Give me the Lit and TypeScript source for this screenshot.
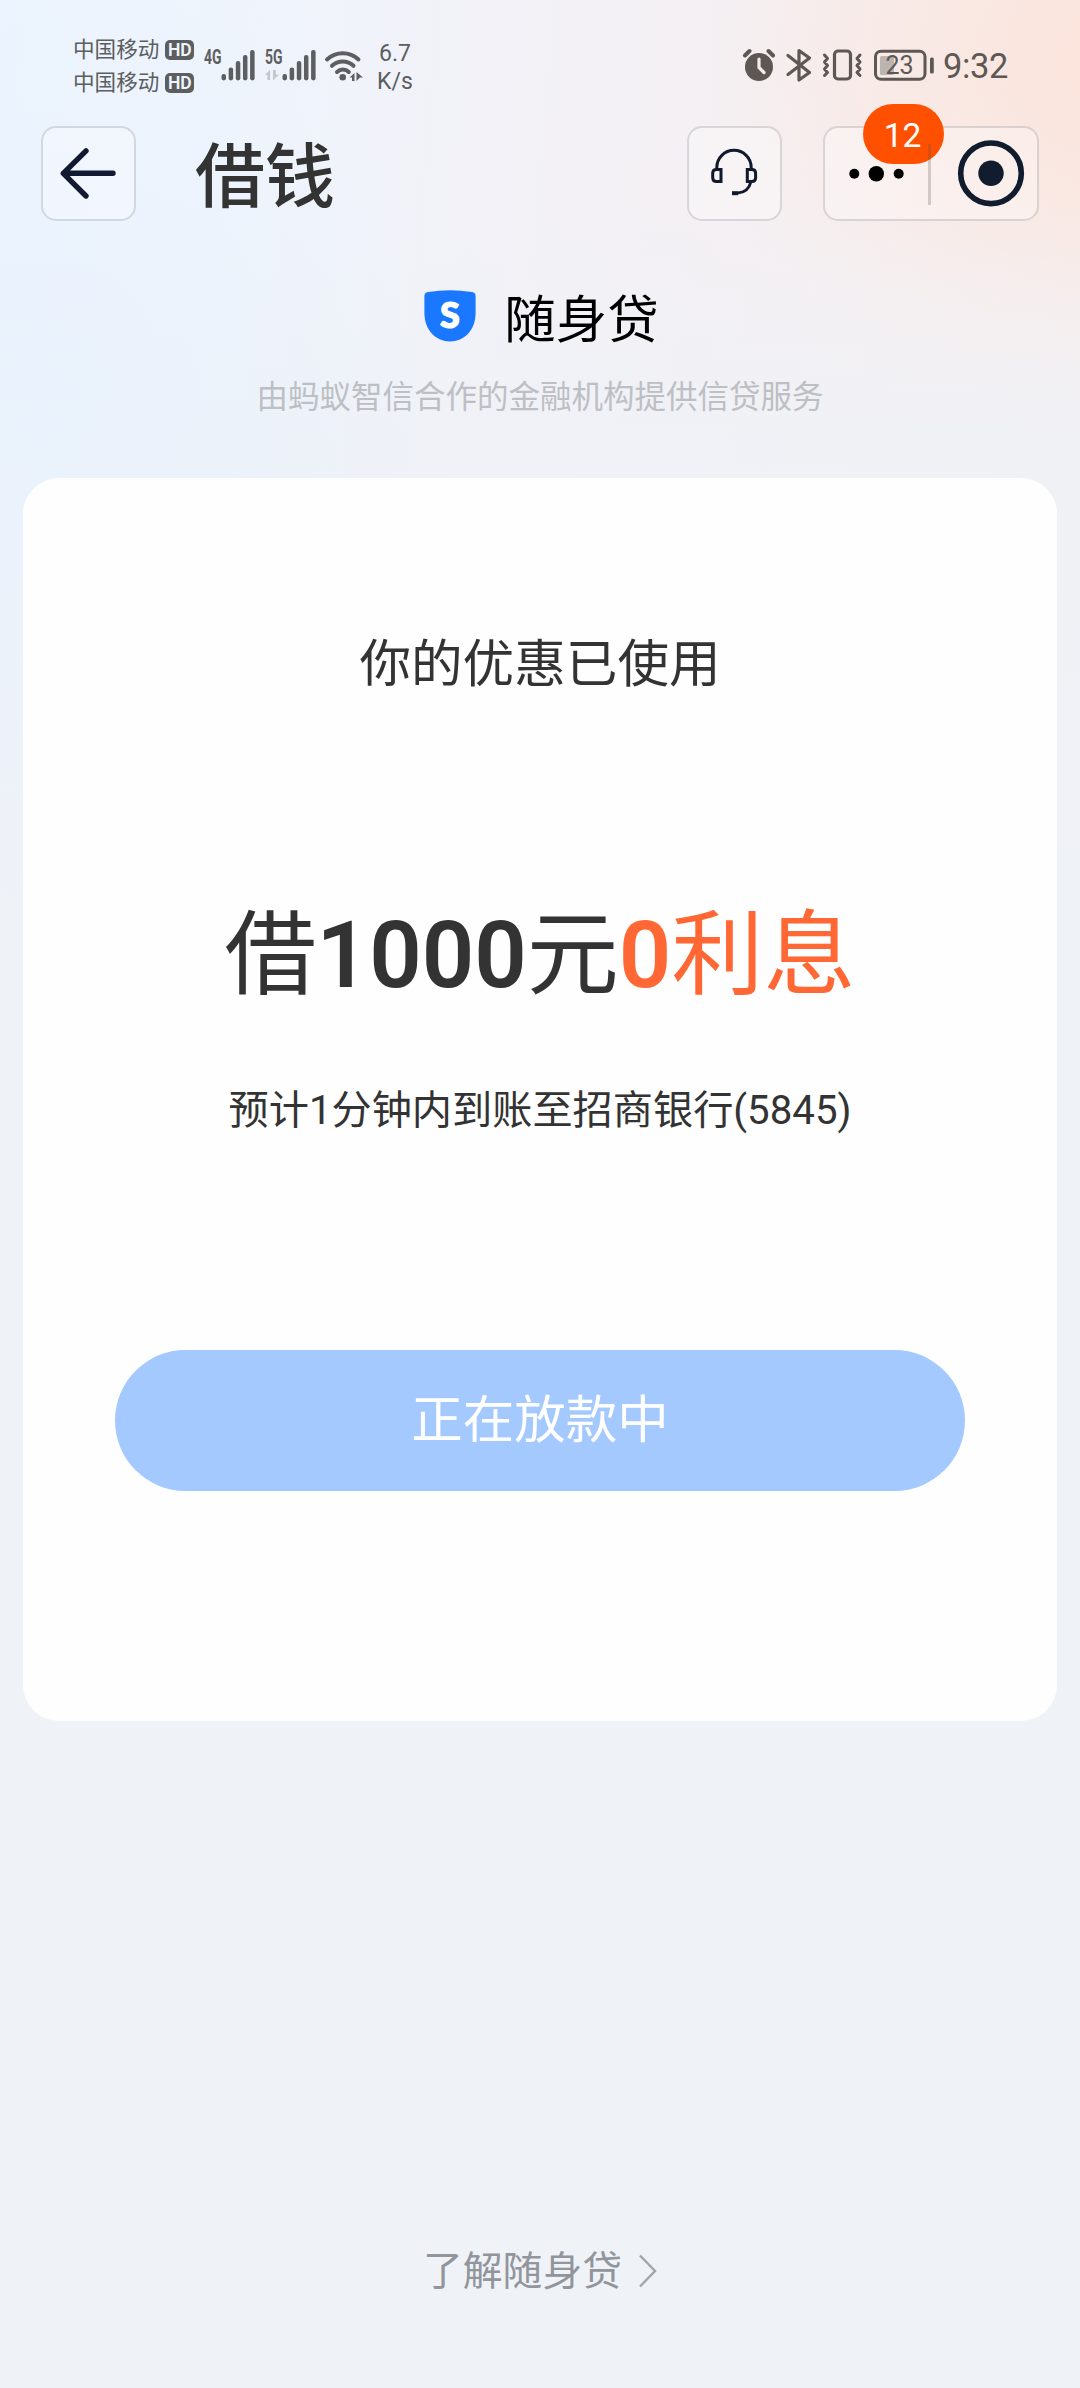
import { LitElement, html, svg, css } from "lit";
import { customElement, property } from "lit/decorators.js";

/** Five-step signal strength meter with its network label. */
@customElement("signal-meter")
class SignalMeter extends LitElement {
  @property() label = "";
  @property({ type: Boolean }) data = false;

  static styles = css`
    :host { display: block; width: 52px; height: 42px; }
    .meter { display: block; overflow: visible; }
    .ink { fill: #5c5e60; }
    .faint { fill: #c3c8cf; }
    .label { font: 700 19.5px Roboto, sans-serif; }
  `;

  render() {
    const tops = [26, 19.5, 13, 7, 2];
    return html`<svg class="meter" width="52" height="42" viewBox="0 -8 52 42">
      <text class="ink label" x="0" y="15.8" textLength="17.5" lengthAdjust="spacingAndGlyphs">${this.label}</text>
      ${this.data
        ? svg`<path class="faint" d="M0 27l5-5.500v10.500h-2.600v-5zM8 22v10.500l6-6h-3.200V22z"/>`
        : ""}
      ${tops.map(
        (t, i) => svg`<rect class="ink" x=${17.5 + i * 7.15} y=${t} width="4.500" height=${32.4 - t} rx="2.100"/>`
      )}
    </svg>`;
  }
}

@customElement("status-bar")
class StatusBar extends LitElement {
  static styles = css`
    :host { display: flex; box-sizing: border-box; height: 126px; padding: 33px 71px 0 73px; color: #5c5e60;
      font-family: Roboto, "Noto Sans CJK SC", sans-serif; }
    .carriers { display: flex; flex-direction: column; width: 131px; }
    .carrier { display: flex; align-items: center; height: 33px; gap: 6px; font-size: 21.6px; line-height: 33px; white-space: nowrap; }
    .hd { width: 29px; height: 20px; border-radius: 5px; background: #5c5e60; color: #f1f5fc;
      font-size: 17.500px; font-weight: 600; line-height: 21px; text-align: center; }
    .meters { display: flex; gap: 9px; padding-top: 7px; }
    .wifi { margin: 15px 0 0 7px; }
    .rate { margin-left: 12px; width: 38px; padding-top: 4px; font-size: 23px; line-height: 33.5px; text-align: center; }
    .rate div + div { margin-top: -6px; }
    .right { display: flex; align-items: flex-start; margin-left: auto; color: #5e5855; }
    .icons { display: block; margin-top: 14px; }
    .time { width: 66px; font-size: 34.5px; line-height: 40px; padding-top: 13px; letter-spacing: -0.4px; white-space: nowrap; }
    .charge { font: 400 25px Roboto, sans-serif; fill: #5e5855; }
  `;

  render() {
    return html`
      <div class="carriers">
        <div class="carrier"><span>中国移动</span><span class="hd">HD</span></div>
        <div class="carrier"><span>中国移动</span><span class="hd">HD</span></div>
      </div>
      <div class="meters">
        <signal-meter label="4G"></signal-meter>
        <signal-meter label="5G" data></signal-meter>
      </div>
      <svg class="wifi" width="40" height="34" viewBox="0 0 40 34">
        <g fill="none" stroke="#5c5e60" stroke-width="4" stroke-linecap="round">
          <path d="M3 11.500a23 23 0 0 1 31.500 0"/>
          <path d="M8 17.800a15.500 15.500 0 0 1 21.500 0"/>
          <path d="M13 24a8.500 8.500 0 0 1 11.800 0"/>
        </g>
        <circle cx="18.700" cy="29.200" r="3.300" fill="#5c5e60"/>
        <path fill="#5c5e60" d="M25.500 29.500l5-4.500v8h-2.500v-3.500zM32.500 24l6.500 5.500h-3.500v.5l-3 3z"/>
      </svg>
      <div class="rate"><div>6.7</div><div>K/s</div></div>
      <div class="right">
        <svg class="icons" width="201" height="38" viewBox="742 47 201 38">
          <g fill="none" stroke="#5e5855" stroke-linecap="round" stroke-linejoin="round">
            <path stroke-width="4" d="M745 55.500l4.500-4.500M773 55.500l-4.500-4.500"/>
            <path stroke-width="3.200" d="M788 55.500l21.500 17-10.500 7.500V50.500l10.500 7.500-21.500 16.500"/>
            <rect x="834.500" y="51" width="16" height="28" rx="3.500" stroke-width="3.200"/>
            <path stroke-width="3" d="M824.500 55l3 3.500-3 3.500 3 3.500-3 3.500 3 3.500-3 3M860 55l-3 3.500 3 3.500-3 3.500 3 3.500-3 3.500 3 3"/>
            <rect x="875.500" y="51.200" width="49.500" height="28" rx="5.500" stroke-width="3"/>
          </g>
          <circle cx="759" cy="67" r="14" fill="#5e5855"/>
          <path d="M759 59v8.500l5 5" fill="none" stroke="#f7ebe9" stroke-width="3.200" stroke-linecap="round"/>
          <rect x="880" y="56" width="14" height="19" rx="1.500" fill="#bcb4b1"/>
          <rect x="930" y="57.500" width="3.800" height="16" rx="1.500" fill="#5e5855"/>
          <text class="charge" x="885.500" y="73.800">23</text>
        </svg>
        <div class="time">9:32</div>
      </div>
    `;
  }
}

@customElement("nav-bar")
class NavBar extends LitElement {
  static styles = css`
    :host { display: flex; box-sizing: border-box; height: 95px; padding: 0 41px;
      font-family: Roboto, "Noto Sans CJK SC", sans-serif; }
    .box { box-sizing: border-box; width: 95px; height: 95px; border: 2px solid rgba(90, 90, 100, 0.2);
      border-radius: 15px; background: rgba(255, 255, 255, 0.3); }
    .box svg { display: block; }
    .title { margin-left: 59px; padding-top: 5px; font-size: 70px; font-weight: 500; line-height: 95px; color: #333; }
    .service { margin-left: auto; }
    .capsule { position: relative; width: 216px; margin-left: 41px; }
    .badge { position: absolute; left: 38px; top: -24px; width: 81px; height: 60px; border-radius: 30px;
      background: #ff5000; color: #fff; font-size: 33.5px; line-height: 63px; text-align: center; text-indent: -2px; }
    .rule { position: absolute; left: 103px; top: 16px; width: 3px; height: 61px; background: rgba(90, 80, 80, 0.25); }
  `;

  render() {
    return html`
      <div class="box">
        <svg width="91" height="91" viewBox="43 128 91 91" fill="none" stroke="#111a30" stroke-width="5.400" stroke-linecap="round" stroke-linejoin="round">
          <path d="M113 173.300H63.500M86 150.800L63.300 173.300 86 196"/>
        </svg>
      </div>
      <div class="title">借钱</div>
      <div class="box service">
        <svg width="91" height="91" viewBox="689 128 91 91" fill="none" stroke="#111a2c" stroke-width="3">
          <path d="M716.800 169v-1.500a17 17 0 0 1 34.400 0V169"/>
          <path d="M721 169.500h-4.500q-3.800 0-3.800 3.700v4.600q0 3.700 3.800 3.700h4.500zM747.300 169.500h4.500q3.800 0 3.800 3.700v4.600q0 3.700-3.800 3.700h-4.500z"/>
          <path d="M750.800 182c-1.500 6.500-6 10.500-13 11" />
          <path stroke-width="4" d="M732 193.200h6"/>
        </svg>
      </div>
      <div class="box capsule">
        <svg width="212" height="91" viewBox="825 128 212 91">
          <circle cx="854.300" cy="173.700" r="5"/>
          <circle cx="876.300" cy="173.700" r="7.700"/>
          <circle cx="898.700" cy="173.700" r="5"/>
          <circle cx="991" cy="173.300" r="30.300" fill="none" stroke="#111c2e" stroke-width="5.600"/>
          <circle cx="991" cy="173.300" r="12.700" fill="#111c2e"/>
        </svg>
        <div class="badge">12</div>
        <div class="rule"></div>
      </div>
    `;
  }
}

@customElement("app-root")
class AppRoot extends LitElement {
  static styles = css`
    :host { display: flex; flex-direction: column; box-sizing: border-box; width: 1080px; height: 2388px; overflow: hidden;
      font-family: Roboto, "Noto Sans CJK SC", sans-serif; color: #333;
      background:
        radial-gradient(ellipse 420px 520px at 40px 420px, rgba(232, 242, 255, 0.7), rgba(232, 242, 255, 0)),
        linear-gradient(180deg, rgba(239, 242, 247, 0) 0, rgba(239, 242, 247, 0) 200px, rgba(239, 242, 247, 0.85) 440px, #eff2f7 900px),
        radial-gradient(ellipse 400px 320px at 1100px 60px, rgba(253, 222, 208, 0.6), rgba(253, 222, 208, 0)),
        linear-gradient(95deg, #ecf4fe 0, #eff4fc 18%, #f3f1f6 46%, #f7eeee 75%, #f9ebe9 100%); }
    .brand { display: flex; justify-content: center; align-items: center; height: 72px; margin-top: 64px; padding-left: 3px; gap: 28px; }
    .shield { display: block; margin-top: -11px; }
    .letter { font: 900 36px Lato, sans-serif; fill: #fff; stroke: #fff; stroke-width: 1.2px; }
    .name { font-size: 51.5px; line-height: 72px; color: #000; }
    .partner { height: 121px; font-size: 31.5px; line-height: 82px; font-weight: 400; text-align: center; color: #bdbfc4; }
    .card { display: flex; flex-direction: column; align-items: center; box-sizing: border-box; width: 1034px; height: 1243px;
      margin: 0 23px; border-radius: 36px; background: #fefefe; }
    .notice { margin-top: 147px; font-size: 51.6px; line-height: 80px; }
    .offer { margin-top: 186px; font-size: 92px; line-height: 130px; white-space: nowrap; }
    .strong { font-weight: 600; }
    .accent { color: #ff6835; }
    .arrival { margin-top: 60px; font-size: 40.2px; line-height: 60px; white-space: nowrap; }
    .action { width: 850px; height: 141px; margin-top: 209px; border: 0; padding: 0; border-radius: 71px; background: #a3c9ff;
      color: #fff; font-family: inherit; font-size: 51.5px; line-height: 141px; }
    .more { display: flex; justify-content: center; align-items: center; gap: 17px; height: 60px; margin-top: 521px;
      font-size: 39.8px; line-height: 60px; color: #92959b; }
    .chevron { margin-top: -3px; }
  `;

  render() {
    return html`
      <status-bar></status-bar>
      <nav-bar></nav-bar>
      <div class="brand">
        <svg class="shield" width="52" height="52" viewBox="0 0 52 52">
          <path fill="#1a77ff" d="M4 2Q26-1.500 48 2q3.600.6 3.600 4v17C51.600 40 40 51.500 26 51.500S.4 40 .4 23V6Q.4 2.600 4 2z"/>
          <text class="letter" x="26" y="38.300" text-anchor="middle">S</text>
        </svg>
        <div class="name">随身贷</div>
      </div>
      <div class="partner">由蚂蚁智信合作的金融机构提供信贷服务</div>
      <div class="card">
        <div class="notice">你的优惠已使用</div>
        <div class="offer">借<span class="strong">1000</span>元<span class="accent"><span class="strong">0</span>利息</span></div>
        <div class="arrival">预计1分钟内到账至招商银行(5845)</div>
        <button class="action">正在放款中</button>
      </div>
      <div class="more">
        <span>了解随身贷</span>
        <svg class="chevron" width="18" height="34" viewBox="0 0 18 34" fill="none" stroke="#a3a6ab" stroke-width="2.500"><path d="M1 1.500l15 15.500-15 15.500"/></svg>
      </div>
    `;
  }
}
